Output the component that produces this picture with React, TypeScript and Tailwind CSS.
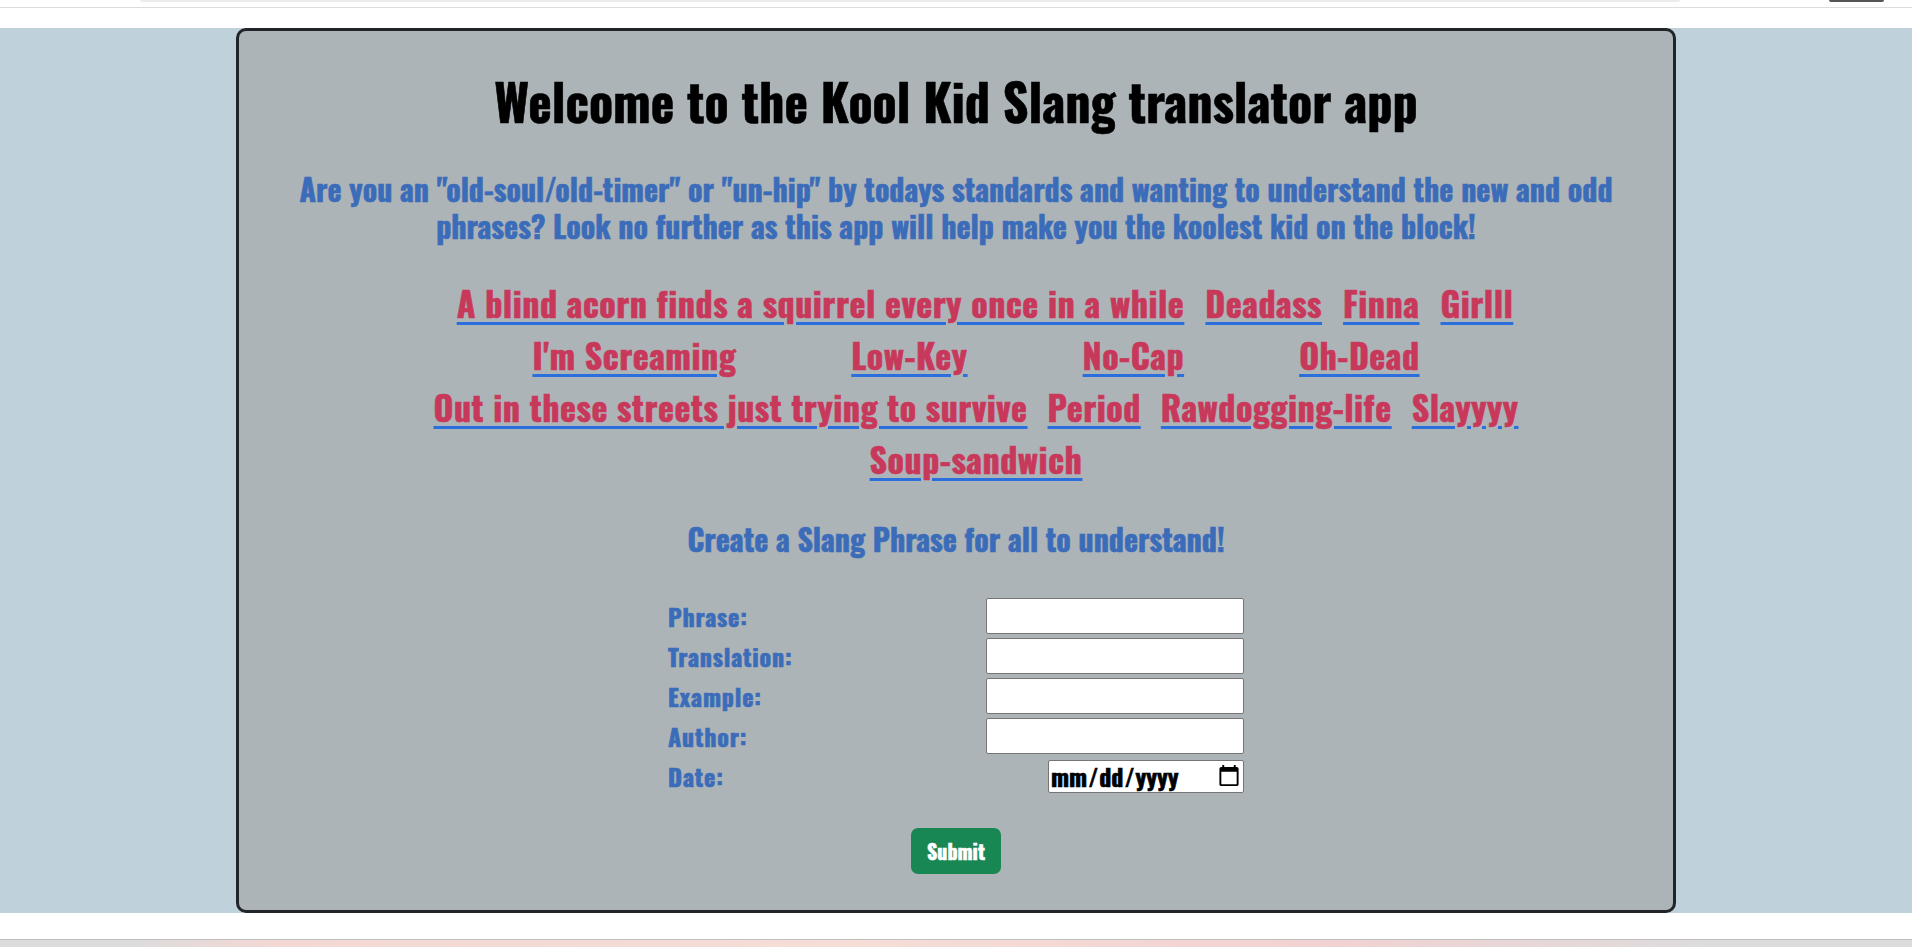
import React from "react";

const linkRows: { items: string[]; gap: string; extra: string }[] = [
  { items: ["A blind acorn finds a squirrel every once in a while", "Deadass", "Finna", "Girlll"], gap: "gap-[21px]", extra: "pl-[18px]" },
  { items: ["I'm Screaming", "Low-Key", "No-Cap", "Oh-Dead"], gap: "gap-[115px]", extra: "" },
  { items: ["Out in these streets just trying to survive", "Period", "Rawdogging-life", "Slayyyy"], gap: "gap-[20px]", extra: "" },
  { items: ["Soup-sandwich"], gap: "gap-[20px]", extra: "" },
];

const fields = ["Phrase:", "Translation:", "Example:", "Author:"];

function FormRow({ label, children }: { label: string; children: React.ReactNode }) {
  return (
    <div className="flex h-[36px] items-center justify-between">
      <label className="text-[24px] font-bold leading-none tracking-[0.035em] text-[#3b6cb9]">{label}</label>
      {children}
    </div>
  );
}

export default function App() {
  return (
    <div className="flex h-[947px] w-full flex-col overflow-hidden bg-white font-['Impact','Oswald',sans-serif] [-webkit-text-stroke:0.6px]">
      {/* top strip */}
      <div className="flex h-[28px] flex-col bg-white">
        <div className="flex h-[2px] items-start">
          <div className="ml-[140px] h-[2px] w-[1540px] rounded-b bg-[#ececec]" />
          <div className="ml-auto mr-[28px] h-[2px] w-[55px] rounded-b bg-[#555]" />
        </div>
        <div className="mt-[5px] h-px bg-[#dcdcdc]" />
      </div>

      {/* main area */}
      <div className="bg-[#bfd2dc]">
        <div className="mx-auto box-border flex h-[885px] w-[1440px] flex-col rounded-[10px] border-[3px] border-[#212529] bg-[#adb4b8] pt-[38px]">
          <h1 className="text-center text-[50px] font-bold leading-[62px] text-black">
            Welcome to the Kool Kid Slang translator app
          </h1>

          <h3 className="mt-[39px] text-center text-[30px] font-bold leading-[37px] text-[#3b6cb9]">
            Are you an "old-soul/old-timer" or "un-hip" by todays standards and wanting to understand the new and odd
            <br />
            phrases? Look no further as this app will help make you the koolest kid on the block!
          </h3>

          <div className="mt-[33px] flex flex-col pl-[40px]">
            {linkRows.map((row, i) => (
              <div key={i} className={`flex h-[52px] items-center justify-center ${row.gap} ${row.extra}`}>
                {row.items.map((item) => (
                  <a
                    key={item}
                    href="#"
                    className="text-[34px] font-bold leading-none tracking-[0.015em] text-[#c8385a] underline decoration-[#2a6fdb] decoration-[3px] underline-offset-[4px]"
                  >
                    {item}
                  </a>
                ))}
              </div>
            ))}
          </div>

          <h3 className="mt-[36px] text-center text-[30px] font-bold leading-[36px] text-[#3b6cb9]">
            Create a Slang Phrase for all to understand!
          </h3>

          <form className="mx-auto mt-[41px] flex w-[576px] flex-col gap-[4px]">
            {fields.map((f) => (
              <FormRow key={f} label={f}>
                <input type="text" className="h-[36px] w-[258px] rounded-[2px] border border-[#767676] bg-white" />
              </FormRow>
            ))}
            <FormRow label="Date:">
              <input
                type="date"
                className="h-[33px] w-[196px] rounded-[2px] border border-[#767676] bg-white pl-[1px] text-[24px] font-bold text-black"
              />
            </FormRow>
          </form>

          <button
            type="button"
            className="mx-auto mt-[34px] h-[46px] w-[90px] rounded-[7px] bg-[#198754] text-[20px] font-bold text-white"
          >
            Submit
          </button>
        </div>
      </div>

      {/* bottom strip */}
      <div className="h-[26px] bg-white" />
      <div className="h-[8px] border-t border-[#bdbdbd] bg-[linear-gradient(90deg,#dcdcdc_0%,#dcdcdc_7%,#f3d8d4_14%,#f6ddd6_45%,#f1d2d2_70%,#e6d8d8_82%,#dcdcdc_90%)]" />
    </div>
  );
}
